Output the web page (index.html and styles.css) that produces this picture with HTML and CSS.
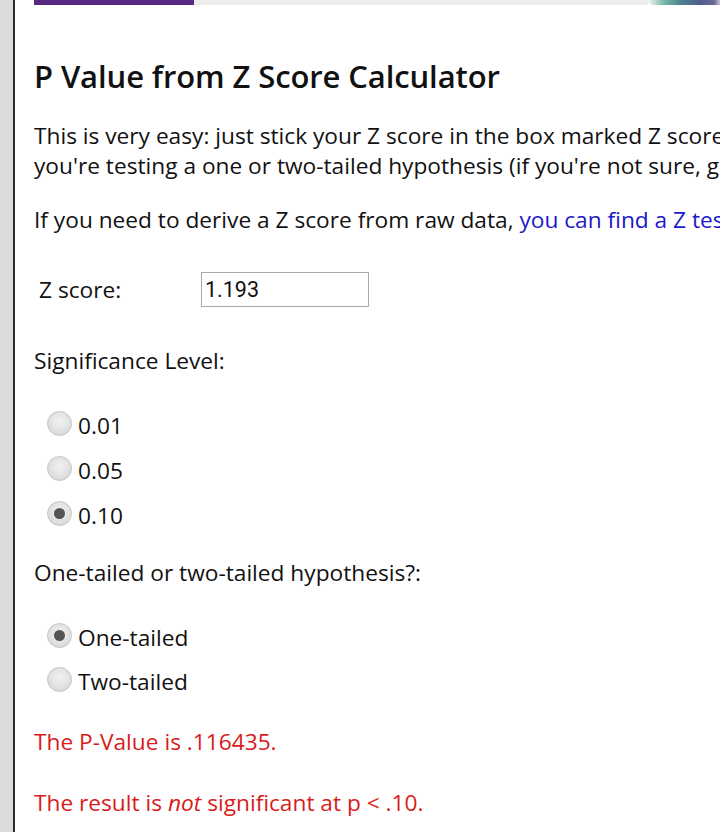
FILE: index.html
```html
<!DOCTYPE html>
<html lang="en">
<head>
<meta charset="utf-8">
<title>P Value from Z Score Calculator</title>
<link rel="stylesheet" href="styles.css">
</head>
<body>
<div class="page">
  <aside class="rail"></aside>
  <main class="content">
    <div class="topbar">
      <div class="topbar-accent"></div>
      <div class="topbar-line"></div>
      <div class="topbar-logo"></div>
    </div>
    <h1 class="title">P Value from Z Score Calculator</h1>
    <p class="text">This is very easy: just stick your Z score in the box marked Z score, select your significance level and whether<br>you're testing a one or two-tailed hypothesis (if you're not sure, go for the two-tailed test), then press Submit.</p>
    <p class="text">If you need to derive a Z score from raw data, <a class="link" href="#">you can find a Z test calculator here</a>.</p>
    <form class="calc">
      <div class="field-row">
        <label class="field-label" for="z">Z score:</label>
        <input class="field-input" id="z" type="text" value="1.193">
      </div>
      <p class="group-title">Significance Level:</p>
      <div class="options">
        <label class="option"><input class="radio" type="radio" name="sig">0.01</label>
        <label class="option"><input class="radio" type="radio" name="sig">0.05</label>
        <label class="option"><input class="radio" type="radio" name="sig" checked>0.10</label>
      </div>
      <p class="group-title">One-tailed or two-tailed hypothesis?:</p>
      <div class="options options-tight">
        <label class="option"><input class="radio" type="radio" name="tail" checked>One-tailed</label>
        <label class="option"><input class="radio" type="radio" name="tail">Two-tailed</label>
      </div>
    </form>
    <p class="result">The P-Value is .116435.</p>
    <p class="result">The result is <em>not</em> significant at p &lt; .10.</p>
  </main>
</div>
</body>
</html>
```
FILE: styles.css
```css
html, body {
  margin: 0;
  padding: 0;
  background: #fff;
  overflow: hidden;
}
body {
  font-family: "Open Sans", "Liberation Sans", sans-serif;
  color: #111;
}
.page {
  display: flex;
  min-height: 832px;
  width: 1200px;
}
.rail {
  width: 13px;
  flex: none;
  background: #dcdcdc;
  border-right: 2px solid #2a2a2a;
}
.content {
  flex: 1;
  padding: 0 0 0 19px;
}
.topbar {
  display: flex;
  height: 5px;
  width: 708px;
  margin-left: -19px;
  padding-left: 19px;
  box-sizing: border-box;
}
.topbar-accent {
  width: 160px;
  background: #5a2a82;
}
.topbar-line {
  flex: 1;
  background: #ececec;
}
.topbar-logo {
  width: 75px;
  background: linear-gradient(90deg, #f4f4f4 0%, #74b8a6 22%, #4d7f8e 45%, #4f5d8c 70%, #6a6a92 88%, #eee 100%);
  border-radius: 0 0 30px 40px;
}
.title {
  font-size: 31px;
  font-weight: 600;
  letter-spacing: -0.1px;
  margin: 51px 0 0;
  line-height: 40px;
}
.text {
  font-size: 22.7px;
  line-height: 30px;
  margin: 25px 0 0;
}
.text + .text {
  margin-top: 24px;
}
.link {
  color: #1a1ac8;
  text-decoration: none;
}
.calc {
  margin: 0;
}
.field-row {
  display: flex;
  align-items: center;
  margin-top: 37px;
  padding-left: 5px;
}
.field-label {
  font-size: 22.7px;
  width: 162px;
}
.field-input {
  width: 168px;
  height: 35px;
  box-sizing: border-box;
  border: 1px solid #a9a9a9;
  font-family: Roboto, "Liberation Sans", sans-serif;
  font-size: 21.5px;
  padding: 0 3px;
  color: #111;
  margin: 0;
}
.group-title {
  font-size: 22.7px;
  line-height: 30px;
  margin: 27px 0 0;
}
.field-row + .group-title {
  margin-top: 39px;
}
.options {
  display: flex;
  flex-direction: column;
  gap: 15px;
  margin-top: 35px;
  padding-left: 13px;
}
.options-tight {
  gap: 14px;
}
.option {
  display: flex;
  align-items: center;
  font-size: 22.7px;
  line-height: 30px;
}
.radio {
  appearance: none;
  -webkit-appearance: none;
  width: 25px;
  height: 25px;
  margin: -6px 6px 0 0;
  border-radius: 50%;
  border: 1px solid #c4c4c4;
  background: radial-gradient(circle at 50% 40%, #f2f2f2 0%, #dcdcdc 70%, #cfcfcf 100%);
  box-sizing: border-box;
  position: relative;
  flex: none;
}
.radio:checked::after {
  content: "";
  position: absolute;
  left: 6px;
  top: 6px;
  width: 11px;
  height: 11px;
  border-radius: 50%;
  background: #555;
}
.result {
  color: #d81c1c;
  font-size: 22.7px;
  line-height: 30px;
  margin: 0;
}
.calc + .result {
  margin-top: 30px;
}
.result + .result {
  margin-top: 31px;
}
.result em {
  font-style: italic;
}
```
